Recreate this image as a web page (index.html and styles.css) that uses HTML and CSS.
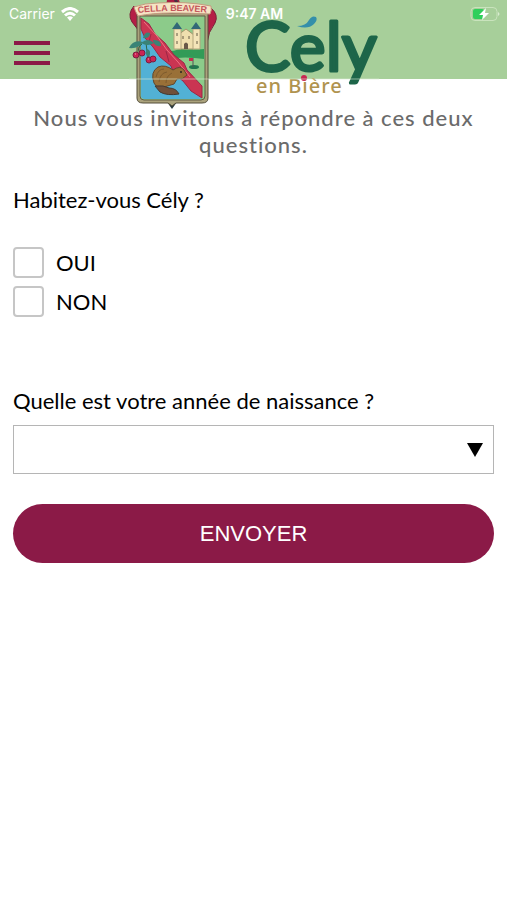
FILE: index.html
```
<!DOCTYPE html>
<html lang="fr">
<head>
  <meta charset="utf-8">
  <meta name="viewport" content="width=device-width, initial-scale=1">
  <title>Cély en Bière</title>
  <link rel="stylesheet" href="styles.css">
</head>
<body>
  <header class="header">
    <div class="status">
      <div class="carrier">
        <span>Carrier</span>
        <svg width="18" height="14" viewBox="0 0 18 14" fill="none" stroke="#fff" stroke-width="3">
          <path d="M1 5Q9-2 17 5M4 8.500Q9 4 14 8.500"/>
          <path d="M6 10.500Q9 8 12 10.500L9 14Z" fill="#fff" stroke="none"/>
        </svg>
      </div>
      <span class="time">9:47 AM</span>
      <svg class="battery" width="30" height="14" viewBox="0 0 30 14">
        <rect x="1" y="0.500" width="26" height="13" rx="4" fill="none" stroke="#c9e3bd"/>
        <rect x="3" y="2" width="11" height="10" rx="2" fill="#30cf5b"/>
        <path d="M28 5q3 2 0 4z" fill="#d9ecd0"/>
        <path d="M16 1L9 8h4l-1 5 7-7h-4z" fill="#fff"/>
      </svg>
    </div>
    <button class="menu" type="button" aria-label="Menu">
      <span></span>
      <span></span>
      <span></span>
    </button>
    <svg class="logo" width="250" height="110" viewBox="129 0 250 110">
      <!-- ribbon behind the shield -->
      <path d="M134 6Q127 14 132 22L139 31V12ZM211 8Q219 15 215 23Q208 32 207 43L203 38V14Z" fill="#b51e46" stroke="#7b2037"/>
      <path d="M167 0h12l2 6h-15z" fill="#a81c41"/>
      <path d="M174 0l2 5h4l-3-5z" fill="#453044"/>
      <!-- shield -->
      <path d="M167 102h10l-5 7z" fill="#26383e"/>
      <path d="M137 13H208V98Q208 103 202 103H176L172 106L168 103H143Q137 103 137 98Z" fill="#aaa27c" stroke="#554f3b"/>
      <path d="M140 16H205V96Q205 100 201 100H144Q140 100 140 96Z" fill="#8ccb8a" stroke="#625b45"/>
      <path d="M141 24L202 96Q202 99 199 99H145Q141 99 141 96Z" fill="#52b1d5"/>
      <path d="M157 50Q170 53 180 49Q193 50 204 49V59Q184 56 169 59Z" fill="#329b57"/>
      <!-- castle -->
      <path d="M178 35l8-6 8 6v14h-16z" fill="#efdfae" stroke="#a2946a"/>
      <path d="M174 29h7v20h-7zM193 29h7v20h-7z" fill="#f4e5b9" stroke="#b3a67c"/>
      <path d="M172 29l5-7 5 7zM191 29l5-7 5 7z" fill="#326877"/>
      <path d="M177 33v3M177 41v3M197 33v3M197 41v3M183 36v3M189 36v3" stroke="#655b44"/>
      <path d="M184 49v-5q2-3 4 0v5z" fill="#685848"/>
      <!-- golf green -->
      <ellipse cx="194" cy="67" rx="5" ry="2" fill="#21764e"/>
      <path d="M193 67v-9" stroke="#555"/>
      <path d="M193 58h-4v3h4z" fill="#c42c4c"/>
      <!-- diagonal band -->
      <path d="M141 18L149 24L155 34L165 43L174 55L184 63L187 70L202 86V98L191 91L183 81L174 74L171 66L160 57L153 47L145 38L141 29Z" fill="#ca3552" stroke="#9b2747"/>
      <path d="M151 34l-2 8M166 51l3 11M180 66l3 9" fill="none" stroke="#9b2747"/>
      <path d="M144 22l13 14 10 14 11 12 12 15" fill="none" stroke="#ef7181"/>
      <!-- cherries -->
      <path d="M142 44Q136 48 140 53M146 43L148 59" fill="none" stroke="#2f6545"/>
      <path d="M129 48Q133 39 143 42Q139 49 129 48M141 43Q148 37 154 43Q148 47 141 43M147 49q5 1 2 9q-5-3-2-9M143 38q2-7 7-5q0 6-7 5M153 40q8-1 8 6q-7 1-8-6" fill="#398376"/>
      <circle cx="136" cy="55" r="3" fill="#cc2453" stroke="#781d40"/>
      <circle cx="142" cy="53" r="3" fill="#cc2453" stroke="#781d40"/>
      <circle cx="149" cy="60" r="3" fill="#cc2453" stroke="#781d40"/>
      <circle cx="153" cy="59" r="3" fill="#cc2453" stroke="#781d40"/>
      <path d="M135 54h1M148 59h1" stroke="#f7a1b0"/>
      <!-- beaver -->
      <path d="M154 83Q150 72 158 67Q165 64 173 70Q180 65 184 70L187 75Q183 80 177 79L174 84L164 87Q157 89 154 83Z" fill="#997037" stroke="#61482d"/>
      <path d="M156 77q2-8 8-8M159 82q1-9 8-10M166 83q0-7 6-10" fill="none" stroke="#7d5b2d"/>
      <path d="M155 86Q164 85 169 88Q176 88 179 94Q167 96 160 92Z" fill="#705039" stroke="#443a31"/>
      <circle cx="181" cy="72" r="1" fill="#292620"/>
      <!-- title banner -->
      <path d="M134 7Q145 3 158 3Q186 1 211 6Q212 10 210 14Q190 13 172 13Q152 13 138 16Q135 11 134 7Z" fill="#f5e4c4" stroke="#c59a7f"/>
      <path id="banner" d="M138 13Q172 9 210 13" fill="none"/>
      <text class="banner-text"><textPath href="#banner">CELLA BEAVER</textPath></text>
      <!-- wordmark -->
      <text class="wordmark" x="245" y="71">Cély</text>
      <path d="M296 12H327V34H296Z" fill="#a7cf9a"/>
      <path d="M297 26Q306 26 309 20Q312 15 316 17Q318 20 314 24Q308 30 297 26Z" fill="#348faa"/>
      <text class="tagline" x="256" y="93">en Bière</text>
      <circle cx="304" cy="78" r="3" fill="#c82651"/>
      <path d="M129 79H379" stroke="#dcebd5" stroke-opacity="0.600"/>
    </svg>
  </header>

  <main class="container">
    <h1>Nous vous invitons à répondre à ces deux questions.</h1>
    <form>
      <fieldset>
        <legend>Habitez-vous Cély ?</legend>
        <label class="choice"><input type="checkbox" name="habite" value="oui">OUI</label>
        <label class="choice"><input type="checkbox" name="habite" value="non">NON</label>
      </fieldset>
      <label class="question" for="annee">Quelle est votre année de naissance ?</label>
      <div class="select-box">
        <select id="annee" name="annee">
          <option value=""></option>
        </select>
        <svg width="16" height="14" viewBox="0 0 16 14"><path d="M0 0h16L8 14z"/></svg>
      </div>
      <button class="submit" type="submit">ENVOYER</button>
    </form>
  </main>
</body>
</html>
```
FILE: styles.css
```
* {
  box-sizing: border-box;
}

body {
  margin: 0;
  background-color: #fff;
  color: #000;
  font-family: Lato, sans-serif;
  font-size: 22px;
  line-height: 28px;
}

/* header */
.header {
  position: relative;
  height: 79px;
  background-color: #a7cf9a;
}

.status {
  position: relative;
  z-index: 1;
  display: grid;
  grid-template-columns: 1fr auto 1fr;
  align-items: center;
  padding: 4px 7px 0 9px;
  color: #fff;
  font-family: Inter, sans-serif;
  font-size: 14px;
  line-height: 20px;
}

.carrier {
  display: flex;
  align-items: center;
  gap: 6px;
}

.time {
  font-weight: 600;
}

.battery {
  justify-self: end;
}

.menu {
  display: flex;
  flex-direction: column;
  gap: 6px;
  width: 36px;
  margin: 17px 0 0 14px;
  padding: 0;
  border: none;
  background: none;
  cursor: pointer;
}

.menu span {
  width: 100%;
  height: 4px;
  background-color: #8b1a47;
}

.logo {
  position: absolute;
  top: 0;
  left: 50%;
  overflow: visible;
  transform: translateX(-50%);
}

.banner-text {
  fill: #c4555a;
  font-family: "Liberation Sans", sans-serif;
  font-size: 9px;
  font-weight: bold;
}

.wordmark {
  fill: #1d6549;
  stroke: #1d6549;
  stroke-width: 3px;
  stroke-linejoin: round;
  font-size: 68px;
  font-weight: 400;
}

.tagline {
  fill: #b0934f;
  font-family: "Noto Sans", sans-serif;
  font-size: 20px;
  font-weight: 500;
  letter-spacing: 1px;
}

/* form */
.container {
  padding: 25px 13px;
}

h1 {
  margin: 0 0 28px;
  color: #6b6b6b;
  font-size: 22px;
  font-weight: 500;
  line-height: 27px;
  letter-spacing: 1px;
  text-align: center;
}

fieldset {
  display: flex;
  flex-direction: column;
  gap: 8px;
  margin: 0 0 70px;
  padding: 0;
  border: none;
}

legend {
  padding: 0;
  margin-bottom: 33px;
}

.choice {
  display: flex;
  align-items: center;
  gap: 12px;
}

.choice input {
  appearance: none;
  width: 31px;
  height: 31px;
  margin: 0;
  border: 2px solid #c6c6c6;
  border-radius: 4px;
  background-color: #fff;
}

.choice input:checked {
  background-color: #8b1a47;
}

.question {
  display: block;
  margin-bottom: 10px;
}

.select-box {
  display: grid;
  align-items: center;
  margin-bottom: 30px;
}

.select-box select,
.select-box svg {
  grid-area: 1 / 1;
}

.select-box select {
  appearance: none;
  width: 100%;
  height: 49px;
  padding: 0 40px 0 12px;
  border: 1px solid #b5b5b5;
  border-radius: 0;
  background-color: #fff;
  font: inherit;
}

.select-box svg {
  justify-self: end;
  margin-right: 11px;
  pointer-events: none;
}

.submit {
  width: 100%;
  height: 59px;
  border: none;
  border-radius: 30px;
  background-color: #8b1a47;
  color: #fff;
  font-family: "Liberation Sans", sans-serif;
  font-size: 22px;
  cursor: pointer;
}
```
